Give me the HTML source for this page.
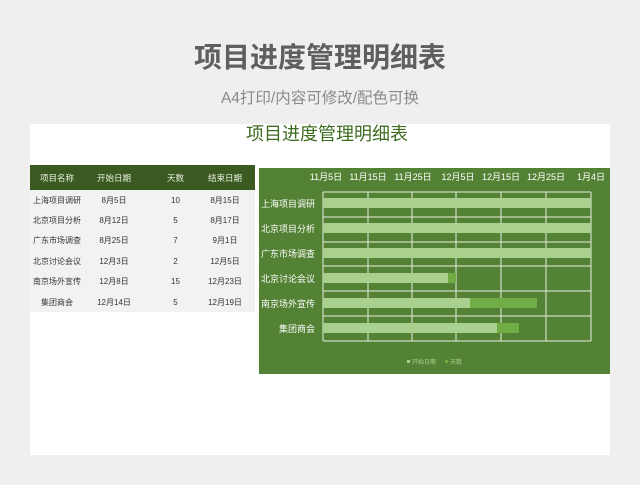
<!DOCTYPE html>
<html><head><meta charset="utf-8"><style>
body{margin:0;width:640px;height:485px;background:#efefef;font-family:"Liberation Sans","Noto Sans CJK SC",sans-serif;position:relative;overflow:hidden}
.a{position:absolute;white-space:nowrap}
.card{position:absolute;left:30px;top:124px;width:580px;height:331px;background:#fff}
table{position:absolute;left:30px;top:165px;width:225px;border-collapse:collapse;table-layout:fixed;font-size:8px;color:#333;background:#f2f2f2}
th{background:#3b5a22;color:#e8eedd;font-weight:normal;height:25px;font-size:8.5px;padding:0}
td{height:20.4px;text-align:center;padding:0}
.c3{padding-left:12px}
</style></head><body>
<div class="a" style="left:0;width:640px;top:36px;text-align:center;font-size:28px;font-weight:bold;color:#5f5f5f">项目进度管理明细表</div>
<div class="a" style="left:0;width:640px;top:86px;text-align:center;font-size:15.5px;color:#8a8a8a">A4打印/内容可修改/配色可换</div>
<div class="card"></div>
<div class="a" style="left:246px;top:120px;font-size:18px;color:#3d6b1f">项目进度管理明细表</div>
<table>
<colgroup><col style="width:54px"><col style="width:60px"><col style="width:51px"><col style="width:60px"></colgroup>
<tr><th>项目名称</th><th>开始日期</th><th class="c3">天数</th><th>结束日期</th></tr>
<tr><td>上海项目调研</td><td>8月5日</td><td class="c3">10</td><td>8月15日</td></tr>
<tr><td>北京项目分析</td><td>8月12日</td><td class="c3">5</td><td>8月17日</td></tr>
<tr><td>广东市场调查</td><td>8月25日</td><td class="c3">7</td><td>9月1日</td></tr>
<tr><td>北京讨论会议</td><td>12月3日</td><td class="c3">2</td><td>12月5日</td></tr>
<tr><td>南京场外宣传</td><td>12月8日</td><td class="c3">15</td><td>12月23日</td></tr>
<tr><td>集团商会</td><td>12月14日</td><td class="c3">5</td><td>12月19日</td></tr>
</table>
<svg class="a" style="left:259px;top:168px" width="351" height="206" viewBox="259 168 351 206">
<rect x="259" y="168" width="351" height="206" fill="#548235"/>
<g stroke="#e6eedf" stroke-width="1" fill="none">
<path d="M323 192V341M368 192V341M412 192V341M456 192V341M501 192V341M546 192V341M591 192V341"/>
<path d="M323 192H591M323 217H591M323 242H591M323 266H591M323 291H591M323 316H591M323 341H591"/>
</g>
<g fill="#a9d08e">
<rect x="323" y="198" width="268" height="10"/>
<rect x="323" y="223" width="268" height="10"/>
<rect x="323" y="248" width="268" height="10"/>
<rect x="323" y="273" width="125" height="10"/>
<rect x="323" y="298" width="147" height="10"/>
<rect x="323" y="323" width="174" height="10"/>
</g>
<g fill="#70ad47">
<rect x="448" y="273" width="8" height="10"/>
<rect x="470" y="298" width="67" height="10"/>
<rect x="497" y="323" width="22" height="10"/>
</g>
<g fill="#fff" font-size="9" font-family="Liberation Sans,Noto Sans CJK SC,sans-serif" text-anchor="middle">
<text x="326" y="180">11月5日</text><text x="368" y="180">11月15日</text><text x="413" y="180">11月25日</text><text x="458" y="180">12月5日</text><text x="501" y="180">12月15日</text><text x="546" y="180">12月25日</text><text x="591" y="180">1月4日</text>
</g>
<g fill="#fff" font-size="9" font-family="Liberation Sans,Noto Sans CJK SC,sans-serif" text-anchor="end">
<text x="315" y="207">上海项目调研</text><text x="315" y="232">北京项目分析</text><text x="315" y="257">广东市场调查</text><text x="315" y="282">北京讨论会议</text><text x="315" y="307">南京场外宣传</text><text x="315" y="332">集团商会</text>
</g>
<rect x="407" y="360" width="3" height="3" fill="#a9d08e"/>
<text x="412" y="364" fill="#a9d08e" font-size="6" font-family="Liberation Sans,Noto Sans CJK SC,sans-serif">开始日期</text>
<rect x="445" y="360" width="3" height="3" fill="#70ad47"/>
<text x="450" y="364" fill="#a9d08e" font-size="6" font-family="Liberation Sans,Noto Sans CJK SC,sans-serif">天数</text>
</svg>
</body></html>
